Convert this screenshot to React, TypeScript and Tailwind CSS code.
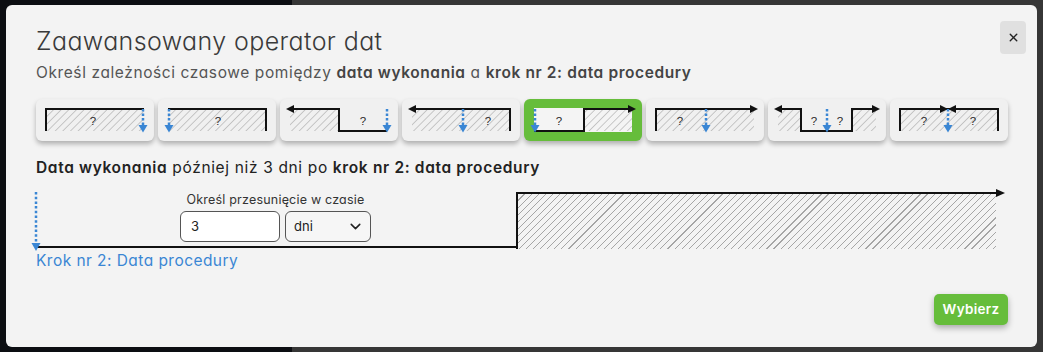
import { X, ChevronDown } from "lucide-react"

const BLUE = "#3a86d4"
const FONT = "font-['Inter','Liberation_Sans',sans-serif] [font-feature-settings:'cv11']"

type IconKind = 1 | 2 | 3 | 4 | 5 | 6 | 7 | 8

const Hatch = ({ id }: { id: string }) => (
  <defs>
    <pattern id={id} width="5.4" height="5.4" patternUnits="userSpaceOnUse" patternTransform="rotate(45)">
      <line x1="0" y1="0" x2="0" y2="5.4" stroke="#939393" strokeWidth="0.9" />
    </pattern>
  </defs>
)

const BlueArrow = ({ x }: { x: number }) => (
  <g>
    <line x1={x} y1={0} x2={x} y2={16} stroke={BLUE} strokeWidth="2.5" strokeDasharray="2.5 2" />
    <polygon points={`${x - 4.5},16 ${x + 4.5},16 ${x},23.5`} fill={BLUE} />
  </g>
)

const Q = ({ x }: { x: number }) => (
  <text x={x} y={16} fontSize="11.5" textAnchor="middle" fill="#2a2a2a" fontFamily="'Liberation Sans', Arial, sans-serif">
    ?
  </text>
)

const LeftHead = () => <polygon points="-4,0 4,-4 4,4" fill="#111" />
const RightHead = () => <polygon points="102,0 94,-4 94,4" fill="#111" />

const OperatorIcon = ({ kind }: { kind: IconKind }) => {
  const id = `hatch-${kind}`
  const fill = `url(#${id})`
  return (
    <svg width="108" height="26" viewBox="-5 -3 108 26" className="overflow-visible">
      <Hatch id={id} />
      {kind === 1 && (
        <>
          <rect x="0" y="0" width="98" height="22" fill={fill} />
          <path d="M0,22 V0 H98" fill="none" stroke="#111" strokeWidth="2" />
          <Q x={47} />
          <BlueArrow x={97} />
        </>
      )}
      {kind === 2 && (
        <>
          <rect x="0" y="0" width="98" height="22" fill={fill} />
          <path d="M0,0 H98 V22" fill="none" stroke="#111" strokeWidth="2" />
          <Q x={50} />
          <BlueArrow x={1} />
        </>
      )}
      {kind === 3 && (
        <>
          <rect x="0" y="0" width="49" height="22" fill={fill} />
          <path d="M2,0 H49 V22 H97" fill="none" stroke="#111" strokeWidth="2" />
          <LeftHead />
          <Q x={73} />
          <BlueArrow x={97} />
        </>
      )}
      {kind === 4 && (
        <>
          <rect x="0" y="0" width="98" height="22" fill={fill} />
          <path d="M2,0 H98 V22" fill="none" stroke="#111" strokeWidth="2" />
          <LeftHead />
          <Q x={76} />
          <BlueArrow x={51} />
        </>
      )}
      {kind === 5 && (
        <>
          <rect x="0" y="-1" width="98" height="24" fill="#f4f4f4" />
          <rect x="50" y="0" width="48" height="22" fill={fill} />
          <path d="M0,22 H50 V0 H96" fill="none" stroke="#111" strokeWidth="2" />
          <RightHead />
          <Q x={25} />
          <BlueArrow x={1} />
        </>
      )}
      {kind === 6 && (
        <>
          <rect x="0" y="0" width="98" height="22" fill={fill} />
          <path d="M0,22 V0 H96" fill="none" stroke="#111" strokeWidth="2" />
          <RightHead />
          <Q x={24} />
          <BlueArrow x={50} />
        </>
      )}
      {kind === 7 && (
        <>
          <rect x="0" y="0" width="23" height="22" fill={fill} />
          <rect x="74" y="0" width="24" height="22" fill={fill} />
          <path d="M2,0 H23 V22 H74 V0 H96" fill="none" stroke="#111" strokeWidth="2" />
          <LeftHead />
          <RightHead />
          <Q x={36} />
          <Q x={62} />
          <BlueArrow x={49} />
        </>
      )}
      {kind === 8 && (
        <>
          <rect x="0" y="0" width="98" height="22" fill={fill} />
          <path d="M0,22 V0 H98 V22" fill="none" stroke="#111" strokeWidth="2" />
          <polygon points="40,-4 40,4 48,0" fill="#111" />
          <polygon points="56,-4 56,4 48,0" fill="#111" />
          <Q x={24} />
          <Q x={73} />
          <BlueArrow x={48} />
        </>
      )}
    </svg>
  )
}

const options: IconKind[] = [1, 2, 3, 4, 5, 6, 7, 8]
const selected: IconKind = 5

export default function App() {
  return (
    <div className={`relative h-[352px] w-[1043px] overflow-hidden ${FONT}`}>
      {/* page behind the overlay */}
      <div className="flex h-full">
        <div className="w-[292px] bg-[#0c0e12]" />
        <div className="flex-1 bg-[#363636]" />
      </div>

      <div className="absolute left-[6px] top-[5px] flex h-[342px] w-[1031px] flex-col rounded-[6px] bg-[#f3f3f3] pl-[30px] pr-[29px]">
        <button className="absolute right-[11px] top-[16px] flex h-[33px] w-[26px] items-center justify-center rounded-[4px] bg-[#e0e0e0] text-[#222]">
          <X size={13} strokeWidth={2.6} />
        </button>

        <h2 className="pt-[20px] text-[25px] font-light leading-[32px] tracking-[0.4px] text-[#3a3a3a]">
          Zaawansowany operator dat
        </h2>
        <p className="mt-[6px] text-[15.5px] leading-[20px] tracking-[0.6px] text-[#555]">
          Określ zależności czasowe pomiędzy <b className="font-semibold text-[#444]">data wykonania</b> a{" "}
          <b className="font-semibold text-[#444]">krok nr 2: data procedury</b>
        </p>

        <div className="mt-[16px] flex gap-[4px]">
          {options.map((k) => (
            <div
              key={k}
              className={`flex h-[42px] w-[118px] items-start rounded-[6px] pl-[5px] pt-[7px] shadow-[0_3px_5px_rgba(0,0,0,0.28)] ${
                k === selected ? "bg-[#66bd3b]" : "bg-[#f0f0f0]"
              }`}
            >
              <OperatorIcon kind={k} />
            </div>
          ))}
        </div>

        <p className="mt-[17px] text-[15.5px] leading-[20px] tracking-[0.65px] text-[#222]">
          <b className="font-semibold">Data wykonania</b> później niż 3 dni po <b className="font-semibold">krok nr 2: data procedury</b>
        </p>

        <div className="mt-[14px] flex">
          <div className="flex h-[56px] w-[480px] border-b-2 border-[#111]">
            <svg width="10" height="60" viewBox="0 0 10 60" className="-ml-[5px] shrink-0 overflow-visible">
              <line x1="5" y1="0" x2="5" y2="51" stroke={BLUE} strokeWidth="2.5" strokeDasharray="2.5 2.2" />
              <polygon points="0.5,51 9.5,51 5,59" fill={BLUE} />
            </svg>
            <div className="flex flex-1 flex-col items-center pr-[6px]">
              <span className="text-[12.5px] leading-[16px] tracking-[0.2px] text-[#333]">Określ przesunięcie w czasie</span>
              <div className="mt-[3px] flex gap-[5px]">
                <div className="flex h-[31px] w-[100px] items-center rounded-[6px] border border-[#555] bg-white px-[10px] text-[13px] text-[#222]">
                  3
                </div>
                <div className="flex h-[31px] w-[86px] items-center justify-between rounded-[6px] border border-[#555] bg-[#f6f6f6] pl-[8px] pr-[6px] text-[13px] text-[#222]">
                  dni
                  <ChevronDown size={17} strokeWidth={2.2} />
                </div>
              </div>
            </div>
          </div>
          <div className="flex flex-1">
            <div className="h-[57px] w-[480px] border-l-2 border-t-2 border-[#111] bg-[image:repeating-linear-gradient(135deg,transparent_0,transparent_4.2px,#a5a5a5_4.2px,#a5a5a5_5px)]" />
            <svg width="9" height="8" viewBox="0 0 9 8" className="-mt-[3px] shrink-0">
              <polygon points="0,0 9,4 0,8" fill="#111" />
            </svg>
          </div>
        </div>

        <p className="mt-[2px] text-[15.5px] leading-[20px] tracking-[0.45px] text-[#3a86d4]">Krok nr 2: Data procedury</p>

        <div className="mt-auto flex justify-end pb-[22px]">
          <button className="h-[31px] w-[74px] rounded-[5px] bg-[#66bd3b] text-[13.5px] font-semibold tracking-[0.3px] text-white shadow-[0_3px_6px_rgba(0,0,0,0.3)]">
            Wybierz
          </button>
        </div>
      </div>
    </div>
  )
}
